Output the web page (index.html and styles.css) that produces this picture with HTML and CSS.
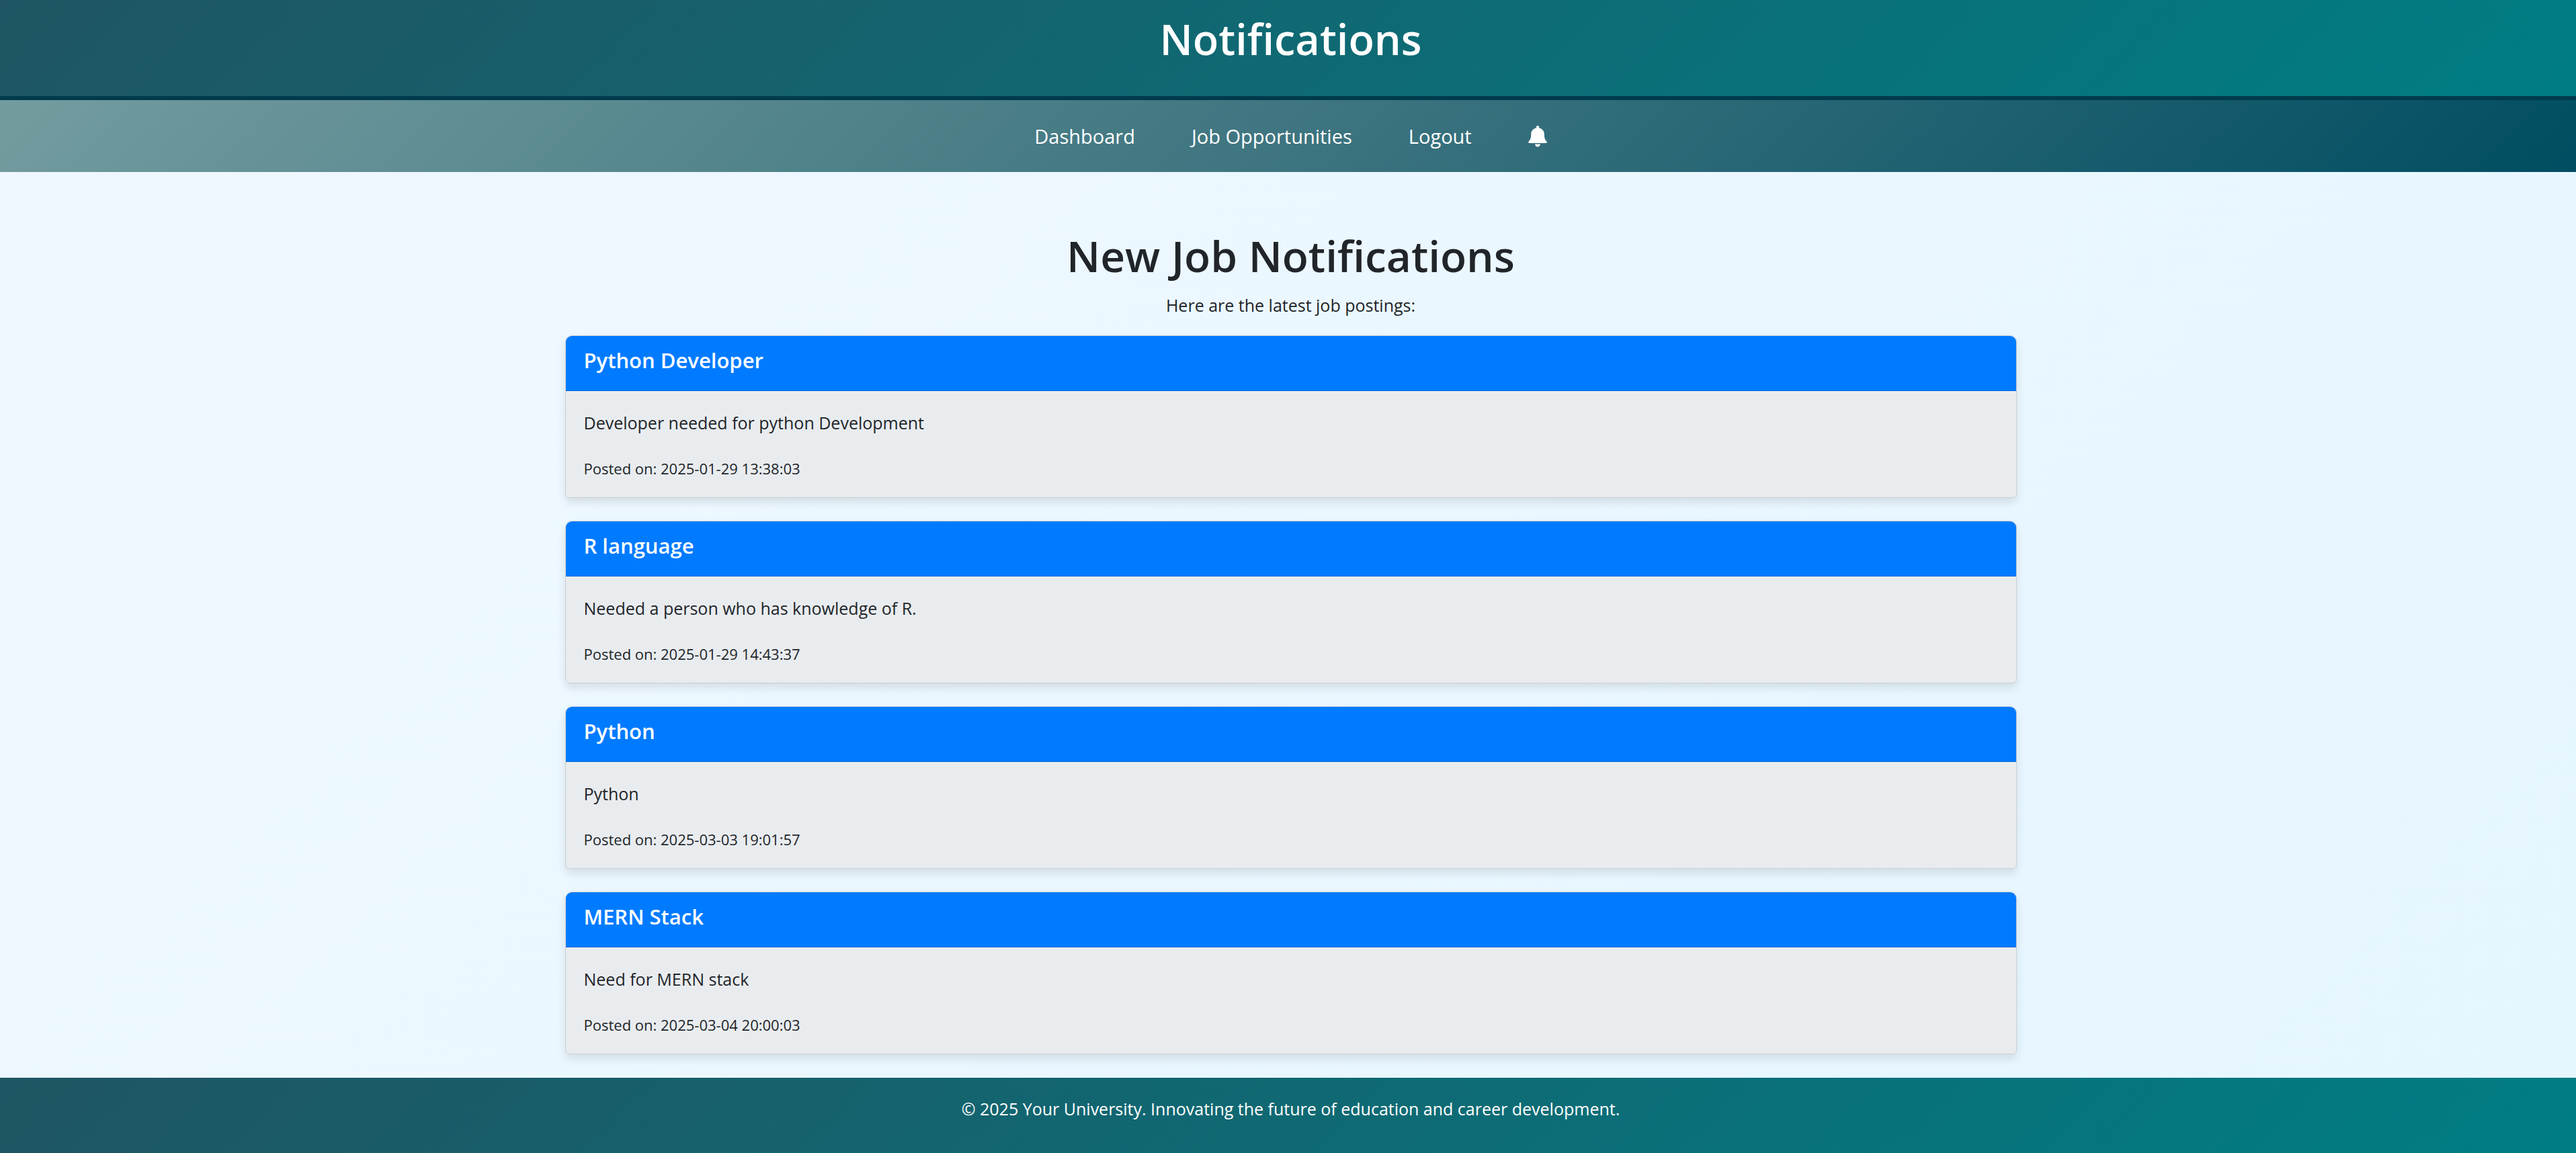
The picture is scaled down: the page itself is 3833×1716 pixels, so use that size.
FILE: index.html
```html
<!DOCTYPE html>
<html lang="en">
<head>
<meta charset="utf-8">
<meta name="viewport" content="width=device-width, initial-scale=1">
<title>Notifications</title>
<link rel="stylesheet" href="styles.css">
</head>
<body>
<header class="site-header">
  <h1 class="heading">Notifications</h1>
</header>
<nav class="site-nav">
  <a class="nav-link" href="#dashboard">Dashboard</a>
  <a class="nav-link" href="#jobs">Job Opportunities</a>
  <a class="nav-link" href="#logout">Logout</a>
  <a class="nav-link" href="#notifications" aria-label="Notifications">
    <svg class="bell" viewBox="0 0 28 32" aria-hidden="true"><path d="M14 0c-1.300 0-2.200 1-2.200 2.200v1.200C7 4.400 4.200 8 4.200 12.500c0 5.500-1 8.500-3.400 10.700C-.4 24.400.1 26 1.700 26h24.600c1.600 0 2.100-1.600.9-2.800-2.400-2.200-3.400-5.200-3.400-10.700 0-4.500-2.800-8.100-7.600-9.100V2.200C16.200 1 15.300 0 14 0zM10 27.500h8c0 2.300-1.800 4-4 4s-4-1.700-4-4z"/></svg>
  </a>
</nav>
<main class="content">
  <h2 class="heading heading-page">New Job Notifications</h2>
  <p class="intro">Here are the latest job postings:</p>
  <div class="cards">
    <article class="card">
      <h3 class="card-title">Python Developer</h3>
      <div class="card-body">
        <p class="card-text">Developer needed for python Development</p>
        <small class="card-date">Posted on: 2025-01-29 13:38:03</small>
      </div>
    </article>
    <article class="card">
      <h3 class="card-title">R language</h3>
      <div class="card-body">
        <p class="card-text">Needed a person who has knowledge of R.</p>
        <small class="card-date">Posted on: 2025-01-29 14:43:37</small>
      </div>
    </article>
    <article class="card">
      <h3 class="card-title">Python</h3>
      <div class="card-body">
        <p class="card-text">Python</p>
        <small class="card-date">Posted on: 2025-03-03 19:01:57</small>
      </div>
    </article>
    <article class="card">
      <h3 class="card-title">MERN Stack</h3>
      <div class="card-body">
        <p class="card-text">Need for MERN stack</p>
        <small class="card-date">Posted on: 2025-03-04 20:00:03</small>
      </div>
    </article>
  </div>
</main>
<footer class="site-footer">
  <p class="footer-text">© 2025 Your University. Innovating the future of education and career development.</p>
</footer>
</body>
</html>
```
FILE: styles.css
```css
* {
  box-sizing: border-box;
}

body {
  margin: 0;
  min-height: 100vh;
  display: flex;
  flex-direction: column;
  font-family: "Segoe UI", "Open Sans", "Noto Sans", sans-serif;
  font-size: 25px;
  line-height: 40px;
  color: #212529;
  background: linear-gradient(135deg, #f0f8ff, #e5f6ff);
}

h1, h2, h3, p {
  margin: 0;
}

.site-header,
.site-nav,
.content,
.site-footer {
  padding-inline: 24px 16px;
}

.heading {
  font-size: 63px;
  font-weight: 600;
  line-height: 80px;
}

.heading-page {
  font-size: 64px;
}

.site-header {
  padding-top: 18px;
  padding-bottom: 45px;
  border-bottom: 6px solid #003b4d;
  color: #fff;
  text-align: center;
  background: linear-gradient(135deg, #1f5562, #007d84);
}

.site-nav {
  display: flex;
  flex-wrap: wrap;
  justify-content: center;
  align-items: center;
  gap: 0 84px;
  padding-top: 32px;
  padding-bottom: 31px;
  background: linear-gradient(135deg, #739c9f, #3e7580 50%, #004d61);
}

.nav-link {
  display: flex;
  align-items: center;
  font-size: 29px;
  line-height: 44px;
  color: #fff;
  text-decoration: none;
}

.bell {
  width: 28px;
  height: 32px;
  fill: currentColor;
}

.content {
  flex: 1;
  padding-top: 85px;
  padding-bottom: 34px;
  text-align: center;
}

.intro {
  padding-top: 13px;
  padding-bottom: 25px;
}

.cards {
  display: flex;
  flex-direction: column;
  gap: 34px;
  max-width: 2160px;
  margin: 0 auto;
  text-align: left;
}

.card {
  border: 1px solid #cdd0d2;
  border-radius: 10px 10px 6px 6px;
  background: #e9ecef;
  box-shadow: 0 7px 13px rgba(0, 0, 0, 0.1);
}

.card-title {
  padding: 16px 27px 25px;
  border-bottom: 1px solid #0065d2;
  border-radius: 9px 9px 0 0;
  font-size: 31px;
  font-weight: 600;
  line-height: 40px;
  color: #fff;
  background: #007bff;
}

.card-body {
  display: flex;
  flex-direction: column;
  gap: 28px;
  padding: 27px 27px 23px;
}

.card-date {
  font-size: 22px;
}

.site-footer {
  padding-top: 26px;
  padding-bottom: 46px;
  color: #fff;
  text-align: center;
  background: linear-gradient(135deg, #1f5562, #007d84);
}
```
